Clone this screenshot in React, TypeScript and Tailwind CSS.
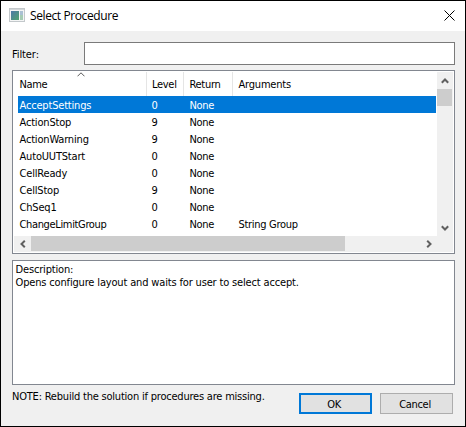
import React from 'react';

const rows: string[][] = [
  ['AcceptSettings', '0', 'None', ''],
  ['ActionStop', '9', 'None', ''],
  ['ActionWarning', '9', 'None', ''],
  ['AutoUUTStart', '0', 'None', ''],
  ['CellReady', '0', 'None', ''],
  ['CellStop', '9', 'None', ''],
  ['ChSeq1', '0', 'None', ''],
  ['ChangeLimitGroup', '0', 'None', 'String Group'],
];

const columns = 'grid grid-cols-[132px_38px_49px_1fr] whitespace-pre';

function Arrow({ turn }: { turn: string }) {
  return (
    <svg className={`block ${turn}`} width="8" height="8" viewBox="0 0 8 8" fill="none" stroke="#606060" strokeWidth="2">
      <path d="M0.8 5.8 L4 2.5 L7.2 5.8" />
    </svg>
  );
}

export default function App() {
  return (
    <div className="flex h-[427px] w-[466px] flex-col overflow-hidden border border-black bg-[#f0f0f0] font-['DejaVu_Sans_Condensed','DejaVu_Sans',sans-serif] text-[11px] leading-[13px] tracking-[-0.3px] text-black [font-stretch:condensed]">
      <header className="flex h-[30px] shrink-0 items-center bg-white pl-2 pr-[10px]">
        <svg className="-mt-0.5 block" width="16" height="14" viewBox="0 0 16 14">
          <defs>
            <linearGradient id="screen" x1="0" y1="0" x2="1" y2="1">
              <stop offset="0" stopColor="#4d79a8" />
              <stop offset="1" stopColor="#4fa36d" />
            </linearGradient>
          </defs>
          <rect x="0.5" y="0.5" width="15" height="13" fill="#f4f5f5" stroke="#c3c8cb" />
          <path d="M1 1.5H15" stroke="#d3d7d9" />
          <rect x="2" y="3" width="8" height="9" fill="url(#screen)" />
          <rect x="11" y="3" width="3" height="4" fill="#a9c0d3" />
          <rect x="11" y="7" width="3" height="5" fill="#a5cbb4" />
        </svg>
        <span className="ml-[5px] grow font-['Open_Sans','Noto_Sans',sans-serif] text-[12px] leading-4 tracking-[-0.4px] [font-stretch:normal]">Select Procedure</span>
        <svg className="-mt-0.5 block" width="11" height="11" viewBox="0 0 11 11" stroke="#000" strokeWidth="1">
          <path d="M0.5 0.5L10.5 10.5M10.5 0.5L0.5 10.5" />
        </svg>
      </header>

      <main className="flex grow flex-col pl-[11px] pr-[10px] pt-[11px]">
        <div className="flex h-[23px] shrink-0 items-center">
          <label className="w-[72px] pt-0.5 tracking-[-0.1px]">Filter:</label>
          <input className="h-[23px] min-w-0 grow border border-[#7a7a7a] bg-white px-1 outline-none" />
        </div>

        <section className="mt-[5px] flex h-[184px] shrink-0 flex-col border border-[#828790] bg-white p-px">
          <div className="flex h-[164px]">
            <div className="grow pl-1 pr-px">
              <div className={`${columns} relative h-6 items-center`}>
                <svg className="absolute left-[59px] top-0" width="8" height="5" viewBox="0 0 8 5" fill="none" stroke="#5a5a5a">
                  <path d="M0.5 4.3L4 0.8L7.5 4.3" />
                </svg>
                <span className="mr-[3px] flex h-6 items-center border-r border-[#e5e5e5] pl-[1.5px] tracking-[-0.4px]">Name</span>
                <span className="-ml-[3px] mr-1 flex h-6 items-center border-r border-[#e5e5e5] pl-[5px]">Level</span>
                <span className="-ml-1 mr-1 flex h-6 items-center border-r border-[#e5e5e5] pl-[5.5px]">Return</span>
                <span className="pl-[1.5px] tracking-[-0.2px]">Arguments</span>
              </div>
              {rows.map((row, i) => (
                <div key={row[0]} className={`${columns} h-[17px] items-center pl-[1.5px] pt-0.5 ${i === 0 ? 'bg-[#0078d7] text-white' : ''}`}>
                  {row.map((cell, j) => (
                    <span key={j} className={j === 0 ? (cell.length > 15 ? 'tracking-[-0.35px]' : 'tracking-[-0.18px]') : ''}>{cell}</span>
                  ))}
                </div>
              ))}
            </div>
            <div className="flex w-4 shrink-0 flex-col items-center bg-[#f0f0f0]">
              <div className="flex h-[17px] items-center"><Arrow turn="" /></div>
              <div className="mr-px h-[17px] w-[15px] bg-[#cdcdcd]" />
              <div className="mt-auto flex h-[17px] items-center"><Arrow turn="rotate-180" /></div>
            </div>
          </div>
          <div className="flex h-4 items-center bg-[#f0f0f0]">
            <div className="flex w-[17px] justify-center"><Arrow turn="-rotate-90" /></div>
            <div className="mb-px h-[15px] w-[314px] bg-[#cdcdcd]" />
            <div className="ml-auto mr-4 flex w-[17px] justify-center"><Arrow turn="rotate-90" /></div>
          </div>
        </section>

        <section className="mt-[6px] h-[125px] shrink-0 border border-[#828790] bg-white px-[2.5px] pt-[2px] tracking-[-0.16px]">
          <p>Description:</p>
          <p>Opens configure layout and waits for user to select accept.</p>
        </section>

        <footer className="flex pr-0.5 pt-[5px]">
          <p className="grow tracking-[-0.21px]">NOTE: Rebuild the solution if procedures are missing.</p>
          <button className="mt-[3px] h-[21px] w-[73px] border-2 border-[#0078d7] bg-[#e1e1e1] pr-[3px] pt-0.5 leading-[13px]">OK</button>
          <button className="ml-2 mt-[3px] h-[21px] w-[73px] border border-[#adadad] bg-[#e1e1e1] pr-[3px] pt-0.5 leading-[13px]">Cancel</button>
        </footer>
      </main>
    </div>
  );
}
